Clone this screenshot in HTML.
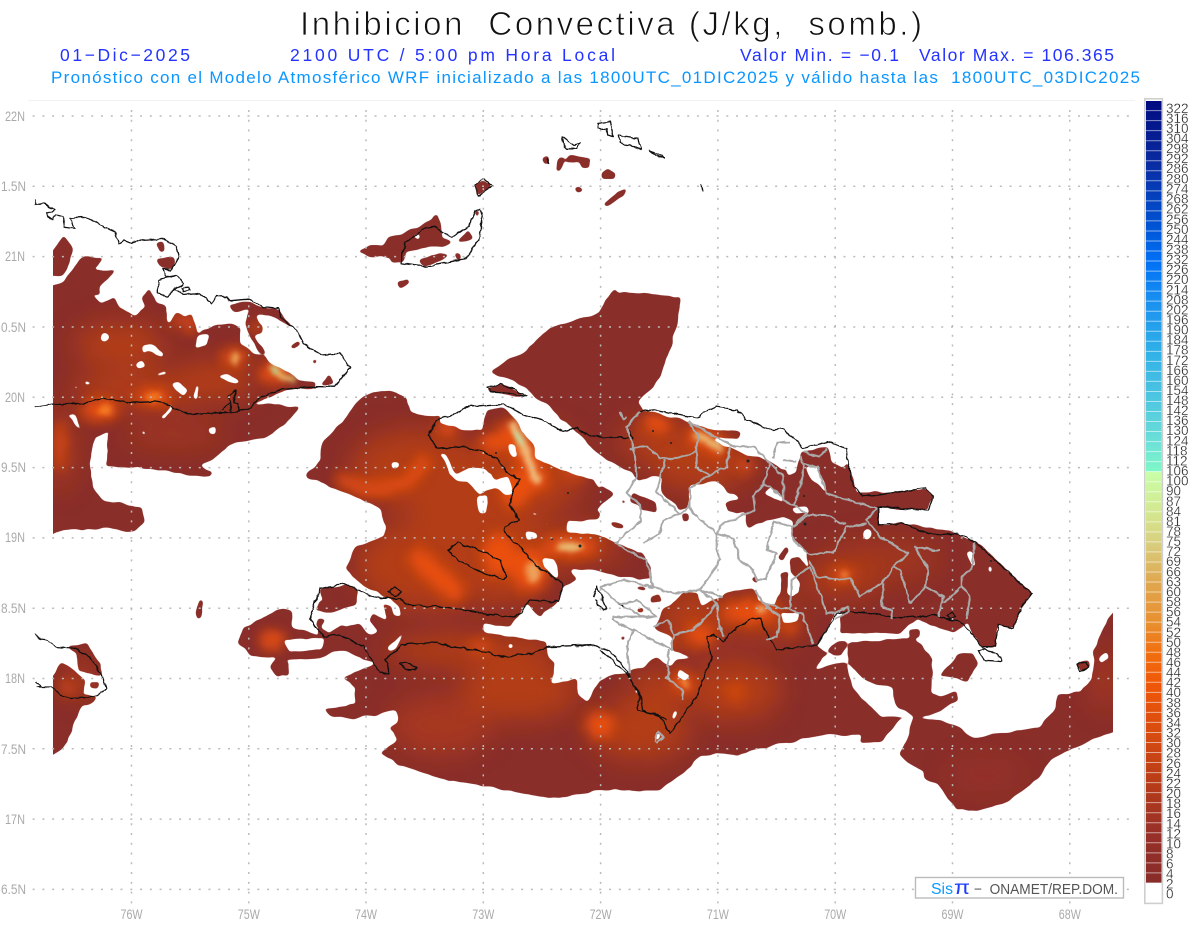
<!DOCTYPE html>
<html><head><meta charset="utf-8"><title>Inhibicion Convectiva</title>
<style>
html,body{margin:0;padding:0;background:#fff}
svg{display:block}
text{font-family:"Liberation Sans",sans-serif}
.c{fill:none;stroke:#111;stroke-width:1.3;stroke-linejoin:round;vector-effect:non-scaling-stroke}
.g{fill:none;stroke:#a9a9a9;stroke-width:2;stroke-linejoin:round;vector-effect:non-scaling-stroke}
.ax{font-size:14px;fill:#aaa}
.cb{font-size:13.5px;fill:#222;stroke:#fff;stroke-width:.25}
</style></head><body>
<svg xmlns="http://www.w3.org/2000/svg" width="1200" height="927" viewBox="0 0 1200 927">
<defs>
<filter id="b14" x="-50%" y="-50%" width="200%" height="200%"><feGaussianBlur stdDeviation="13"/></filter>
<filter id="b6" x="-50%" y="-50%" width="200%" height="200%"><feGaussianBlur stdDeviation="6"/></filter>
<filter id="b3" x="-50%" y="-50%" width="200%" height="200%"><feGaussianBlur stdDeviation="2.5"/></filter>
<filter id="smooth" filterUnits="userSpaceOnUse" x="0" y="90" width="1140" height="780" color-interpolation-filters="sRGB">
<feTurbulence type="fractalNoise" baseFrequency=".07" numOctaves="2" seed="4" result="n"/>
<feDisplacementMap in="SourceGraphic" in2="n" scale="5" xChannelSelector="R" yChannelSelector="G" result="d"/>
<feGaussianBlur in="d" stdDeviation="1.5"/>
<feComponentTransfer><feFuncA type="linear" slope="7" intercept="-3"/></feComponentTransfer>
</filter>
<filter id="wig" filterUnits="userSpaceOnUse" x="0" y="90" width="1140" height="800" color-interpolation-filters="sRGB">
<feTurbulence type="fractalNoise" baseFrequency=".13" numOctaves="2" seed="7" result="n"/>
<feDisplacementMap in="SourceGraphic" in2="n" scale="4" xChannelSelector="R" yChannelSelector="G"/>
</filter>
<clipPath id="dom"><rect x="53" y="90" width="1060" height="780"/></clipPath>
<linearGradient id="bar" x1="0" y1="0" x2="0" y2="1">
<stop offset="0" stop-color="#000a80"/><stop offset=".077" stop-color="#0a2aa0"/><stop offset=".154" stop-color="#0050d0"/><stop offset=".205" stop-color="#0070f5"/><stop offset=".256" stop-color="#1a90f0"/><stop offset=".32" stop-color="#30b0e8"/><stop offset=".385" stop-color="#50c8e0"/><stop offset=".436" stop-color="#6ce0d8"/><stop offset=".474" stop-color="#80f8c8"/><stop offset=".474" stop-color="#c8ffa8"/><stop offset=".526" stop-color="#d4e890"/><stop offset=".564" stop-color="#d8d080"/><stop offset=".615" stop-color="#e0a850"/><stop offset=".667" stop-color="#e89030"/><stop offset=".705" stop-color="#f07010"/><stop offset=".744" stop-color="#f05808"/><stop offset=".808" stop-color="#d84c10"/><stop offset=".872" stop-color="#b83c18"/><stop offset=".936" stop-color="#983028"/><stop offset="1" stop-color="#882c2a"/>
</linearGradient>
<mask id="land" maskUnits="userSpaceOnUse" x="0" y="0" width="1200" height="927">
<rect width="1200" height="927" fill="#000"/>
<g fill="#fff">
<polygon transform="translate(20 180) scale(.33333)" points="70,240 99,210 135,165 158,205 150,238 130,285 130,305 190,228 250,235 215,270 290,268 240,320 240,345 165,345 215,345 245,370 285,350 300,385 345,405 375,380 365,355 385,325 410,365 440,375 445,435 470,395 495,410 515,400 530,460 570,440 630,430 660,445 660,490 700,520 735,525 745,545 800,575 835,600 890,610 880,625 800,630 700,670 840,680 800,730 740,770 640,790 590,830 540,860 578,875 570,890 520,885 450,875 360,865 262,860 265,760 285,745 225,770 210,845 220,930 250,960 365,985 375,1025 345,1055 270,1045 130,1050 100,1065 70,1085"/>
<polygon transform="translate(20 180) scale(.33333)" points="625,375 670,365 770,388 830,455 790,430 745,405 705,405 725,440 725,460 700,465 740,520 715,515 690,475 680,425 690,385 660,395 640,395"/>
<polygon transform="translate(20 180) scale(.33333)" points="810,495 840,480 840,495 815,505"/>
<polygon transform="translate(20 180) scale(.33333)" points="875,545 895,535 890,555"/>
<polygon transform="translate(20 180) scale(.33333)" points="900,615 925,585 945,615"/>
<polygon transform="translate(20 180) scale(.33333)" points="960,545 972,545 970,555"/>
<polygon transform="translate(20 180) scale(.33333)" points="405,190 430,185 437,215 425,218"/>
<polygon transform="translate(20 180) scale(.33333)" points="410,235 460,230 465,250 455,270 420,255"/>
<polygon points="65,647 87,643 100,663 102,677 87,673 78,670 77,653"/>
<polygon points="62,663 72,668 85,680 83,695 98,695 95,702 83,705 75,720 68,742 53,755 45,762 45,686"/>
<polygon points="91,682 99,683 99,688 91,688"/>
<polygon points="238,643 243,628 257,620 283,608 292,610 293,628 325,637 342,627 358,623 372,640 363,650 333,652 320,658 283,660 290,662 287,675 277,677 270,668 277,658 260,657 250,655"/>
<polygon transform="translate(300 380) scale(.33333)" points="20,280 60,240 70,180 100,150 140,110 190,45 270,30 320,50 330,95 380,110 420,105 420,130 500,150 545,150 560,95 610,80 650,125 680,170 700,190 710,240 760,260 830,285 880,300 900,330 940,340 890,390 915,410 890,420 800,420 800,460 900,465 950,490 1000,510 1040,540 1060,590 1020,600 960,590 880,570 810,570 830,600 790,620 780,660 730,700 720,710 680,670 660,700 630,740 550,730 550,755 600,770 740,785 700,830 300,850 190,840 100,790 60,770 50,730 85,760 125,735 170,745 215,765 235,755 205,720 220,700 260,720 250,670 275,680 280,710 305,710 300,680 270,660 250,650 235,630 215,630 180,610 135,560 170,500 250,470 260,440 240,390 190,360 100,325 20,290"/>
<polygon transform="translate(300 380) scale(.33333)" points="925,420 970,430 975,445 935,445"/>
<polygon transform="translate(300 380) scale(.33333)" points="60,660 125,655 120,680 80,700 45,690"/>
<polygon transform="translate(300 380) scale(.33333)" points="50,715 80,720 60,740 45,735"/>
<polygon points="318,590 345,585 360,590 355,605 330,612"/>
<polygon points="195,612 200,599 203,601 202,617 197,619"/>
<polygon points="490,372 525,350 550,328 575,320 600,312 605,300 615,287 618,292 633,293 682,297 672,345 660,378 638,402 643,411 660,413 690,422 713,430 740,432 738,440 720,438 712,440 747,455 760,457 783,470 800,460 800,452 827,447 832,462 843,468 848,462 857,493 883,493 925,488 933,497 928,510 878,508 878,525 902,523 958,533 977,543 1007,570 1032,593 1022,607 1013,628 998,625 995,647 980,647 967,623 953,633 917,620 900,633 840,633 840,613 833,618 817,647 710,657 690,657 673,650 672,637 653,628 663,610 682,593 640,560 640,485 637,480 633,473 613,463 597,453 580,435 560,417 540,400 527,388 510,380"/>
<polygon points="487,388 500,384 517,390 527,397 507,394 490,392"/>
<polygon points="343,678 355,688 355,703 322,710 333,717 353,719 397,710 398,723 388,728 397,740 380,753 400,765 440,778 495,788 530,795 560,798 600,790 660,790 690,768 700,756 717,753 737,756 767,747 823,735 863,735 860,743 882,742 900,720 910,717 882,717 852,688 847,663 838,663 813,670 828,653 817,647 717,643 710,657 677,660 670,667 657,657 643,667 627,670 610,675 600,680 587,702 577,693 575,667 563,670 550,657 547,642 483,632 420,640"/>
<polygon points="848,643 913,637 933,660 930,692 940,696 958,692 958,700 937,713 917,718 897,708 892,687 867,682 848,663"/>
<polygon points="913,717 953,723 973,738 1040,727 1053,710 1058,695 1080,693 1093,677 1093,650 1113,612 1125,600 1125,728 1113,732 1073,748 1050,760 1040,777 1010,800 977,811 955,809 938,783 925,780 923,772 900,755 908,735"/>
<polygon points="827,650 837,640 847,642 842,655 833,655"/>
<polygon points="909,629 919,629 919,637 911,638"/>
<polygon points="938,677 957,655 973,653 978,663 967,683 957,677"/>
<polygon points="1076,664 1087,661 1089,668 1080,672"/>
<polygon points="358,252 370,246 382,246 390,237 418,227 438,213 440,222 442,237 452,242 443,247 430,247 407,252 403,263 390,262 390,257 373,258"/>
<polygon points="418,260 440,253 450,255 440,262 422,267"/>
<polygon points="454,254 461,254 459,262"/>
<polygon points="457,242 468,229 473,238 465,243"/>
<polygon points="473,211 479,211 477,219"/>
<polygon points="396,282 407,277 409,282 400,289"/>
<polygon points="475,185 482,180 493,186 478,195"/>
<polygon points="542,158 548,157 548,164 544,164"/>
<polygon points="556,160 560,156 565,157 561,172 556,171"/>
<polygon points="565,161 568,155 583,157 590,160 590,168 582,168 580,162"/>
<polygon points="601,172 608,169 616,173 616,179 601,179"/>
<polygon points="574,188 580,186 584,190 577,194"/>
<polygon points="603,203 617,192 627,188 625,197 607,206"/>
<polygon points="621,278 625,277 625,282"/>
</g>
<g fill="#000">
<polygon transform="translate(20 180) scale(.33333)" points="60,300 99,292 130,285 130,305 99,318 60,330"/>
<g transform="translate(20 180) scale(.33333)">
<ellipse cx="253" cy="473" rx="12" ry="14"/>
<polygon points="180,490 200,503 190,490"/><polygon points="225,525 270,538 240,538"/><polygon points="370,495 395,490 430,525 425,535 385,510 370,525"/><polygon points="345,555 365,540 375,560 355,568"/><polygon points="410,578 440,575 440,585 415,585"/><polygon points="190,605 235,615 195,615"/><polygon points="165,615 180,625 165,630"/><polygon points="452,610 475,605 505,630 490,648"/><polygon points="525,615 535,615 532,660 520,655"/><polygon points="590,590 625,580 660,605 640,610"/><polygon points="530,465 565,460 560,500 525,505"/><polygon points="135,705 165,703 185,745 225,770 210,770 170,740 150,715"/><polygon points="420,715 450,680 460,685 430,718"/><polygon points="450,660 462,685 448,675"/><polygon points="565,745 590,738 585,765 570,765"/><polygon points="365,750 385,760 370,765"/>
</g>
<g transform="translate(300 380) scale(.33333)">
<polygon points="272,248 298,248 298,262 275,265"/>
<polygon points="420,215 436,222 448,255 470,285 508,265 556,268 590,300 628,290 640,345 618,350 588,322 535,345 505,305 470,302 445,280"/>
<polygon points="530,350 560,348 565,365 558,400 538,400"/>
<polygon points="625,190 645,195 655,225 640,235 625,215"/>
<polygon points="400,150 412,150 410,165"/><polygon points="565,150 585,150 575,160"/>
<polygon points="695,392 725,410 700,405"/><polygon points="735,387 760,410 745,405"/><polygon points="735,428 760,433 735,437"/>
<polygon points="675,455 710,460 715,480 680,480"/><polygon points="695,503 707,503 700,517"/>
<polygon points="725,535 760,535 775,575 780,595 755,585 735,565"/><polygon points="575,275 580,295 570,295"/>
<polygon points="620,790 640,790 640,805 625,805"/><polygon points="260,800 315,755 290,800 265,815"/>
<polygon points="650,375 660,375 655,390"/>
</g>
<g transform="translate(600 380) scale(.33333)">
<polygon points="110,310 160,290 185,290 185,335 240,390 265,380 270,320 350,300 420,355 375,370 385,395 415,400 435,395 440,440 500,420 550,410 580,420 575,470 620,515 625,560 590,560 570,570 600,610 600,640 575,650 560,640 560,575 540,580 540,640 520,680 475,660 465,630 400,630 360,650 300,680 295,640 250,640 190,690 165,740 100,700 50,610 165,600 150,560 130,520 90,490 40,470 0,470 0,385 45,340 0,310 0,235"/>
<polygon points="610,260 650,255 670,300 680,335 740,365 690,345 640,305"/>
<polygon points="690,195 740,210 745,240 725,230"/>
<polygon points="490,340 510,320 545,345 550,370"/>
<polygon points="555,240 595,245 590,280 565,290 555,260"/>
<polygon points="575,380 620,380 625,400 590,400"/>
<ellipse cx="803" cy="463" rx="12" ry="18"/>
<polygon points="1095,515 1115,515 1135,560 1120,555"/><ellipse cx="1170" cy="565" rx="6" ry="10"/>
<polygon points="540,700 600,695 590,720 550,730"/><polygon points="700,700 745,690 720,710 700,715"/>
<polygon points="240,870 270,885 255,905 235,890"/><polygon points="100,930 115,920 110,945"/>
<polygon points="445,270 460,270 455,280"/><polygon points="165,1060 185,1060 170,1085"/>
<polygon points="225,985 232,1000 225,1020 218,1010"/>
<polygon points="-100,720 -40,730 0,690 55,750 90,880 0,890 -150,910"/>
</g>
<polygon points="1097,660 1106,651 1108,658 1100,664"/>
<polygon points="283,640 325,638 320,650 290,652"/>
<polygon points="215,380 240,375 235,395" transform="translate(340 110) scale(.33333)"/>
</g>
<g fill="#fff" transform="translate(600 380) scale(.33333)">
<polygon points="100,340 140,355 170,370 170,400 125,390 120,375 90,365"/><polygon points="62,358 78,362 68,375"/><polygon points="25,420 70,430 75,445 40,440"/>
<polygon points="0,315 45,340 0,380"/>
<polygon points="245,400 265,400 265,425 245,425"/><polygon points="385,365 420,360 420,400 390,395"/>
<polygon points="440,395 480,360 500,360 550,405 500,420 445,445"/><polygon points="360,305 420,320 435,350 385,340"/>
<polygon points="530,530 565,495 570,515 545,540"/><polygon points="570,540 600,530 625,570 590,570 575,580"/>
<polygon points="543,590 565,575 565,620 555,650 540,650"/><polygon points="453,598 472,588 472,612"/>
<polygon points="105,630 120,620 145,625 130,635"/><polygon points="150,650 175,640 190,665 150,670"/><polygon points="60,773 77,768 72,787"/>
<polygon points="670,275 690,280 715,320 700,335 680,330"/><polygon points="108,685 130,678 132,697 112,696"/>
</g>
</mask>
</defs>
<rect width="1200" height="927" fill="#fff"/>

<!-- titles -->
<text x="300" y="35" font-size="33" fill="#111" stroke="#fff" stroke-width=".8" textLength="622" lengthAdjust="spacing">Inhibicion&#160;&#160;Convectiva (J/kg,&#160;&#160;somb.)</text>
<g font-size="17.5" fill="#2433ff">
<text x="60" y="61" textLength="130" lengthAdjust="spacing">01−Dic−2025</text>
<text x="290" y="61" textLength="325" lengthAdjust="spacing">2100 UTC / 5:00 pm Hora Local</text>
<text x="740" y="61" textLength="159" lengthAdjust="spacing">Valor Min. = −0.1</text>
<text x="919" y="61" textLength="195" lengthAdjust="spacing">Valor Max. = 106.365</text>
</g>
<text x="51" y="83" font-size="17" fill="#0a96ff" textLength="1089" lengthAdjust="spacing">Pronóstico con el Modelo Atmosférico WRF inicializado a las 1800UTC_01DIC2025 y válido hasta las&#160;&#160;1800UTC_03DIC2025</text>

<path d="M28 100.5H1135" stroke="#f2f2f2" fill="none"/>

<!-- data field -->
<g clip-path="url(#dom)">
<g filter="url(#smooth)">
<g mask="url(#land)">
<rect x="0" y="90" width="1140" height="760" fill="#8a2e2a"/>
<g filter="url(#b14)" fill="#b23d18">
<ellipse cx="120" cy="345" rx="45" ry="22"/><ellipse cx="140" cy="390" rx="70" ry="18"/><ellipse cx="215" cy="380" rx="40" ry="20"/>
<ellipse cx="60" cy="450" rx="10" ry="40"/><ellipse cx="175" cy="435" rx="50" ry="12" opacity=".6"/>
<ellipse cx="420" cy="470" rx="70" ry="40"/><ellipse cx="430" cy="565" rx="75" ry="45"/><ellipse cx="505" cy="555" rx="45" ry="50"/><ellipse cx="460" cy="520" rx="50" ry="30"/>
<ellipse cx="470" cy="650" rx="85" ry="16"/><ellipse cx="520" cy="690" rx="60" ry="30"/><ellipse cx="640" cy="730" rx="50" ry="30"/>
<ellipse cx="735" cy="690" rx="45" ry="30"/><ellipse cx="440" cy="725" rx="50" ry="30" opacity=".7"/>
<ellipse cx="530" cy="470" rx="55" ry="45"/><ellipse cx="570" cy="545" rx="50" ry="20"/><ellipse cx="660" cy="440" rx="40" ry="20"/>
<ellipse cx="700" cy="465" rx="50" ry="25"/><ellipse cx="880" cy="560" rx="60" ry="20" opacity=".6"/><ellipse cx="840" cy="580" rx="40" ry="15"/>
<ellipse cx="690" cy="620" rx="30" ry="30"/><ellipse cx="750" cy="615" rx="45" ry="20"/><ellipse cx="660" cy="690" rx="30" ry="20"/>
<ellipse cx="1105" cy="680" rx="12" ry="30" opacity=".7"/><ellipse cx="985" cy="775" rx="40" ry="18" opacity=".25"/><ellipse cx="80" cy="680" rx="15" ry="15"/>
<ellipse cx="780" cy="625" rx="20" ry="15"/>
</g>
<g filter="url(#b6)" fill="#ea4f0c">
<ellipse cx="100" cy="410" rx="18" ry="11"/><ellipse cx="153" cy="397" rx="18" ry="8"/><ellipse cx="235" cy="357" rx="12" ry="9"/><ellipse cx="190" cy="323" rx="5" ry="11"/><ellipse cx="177" cy="320" rx="4" ry="8"/><ellipse cx="257" cy="327" rx="5" ry="6"/><ellipse cx="275" cy="372" rx="15" ry="12"/>
<path d="M337 477Q375 500 412 478L427 458" fill="none" stroke="#ea4f0c" stroke-width="11"/>
<path d="M413 553L460 597" fill="none" stroke="#ea4f0c" stroke-width="20"/>
<path d="M507 423L530 463L540 490" fill="none" stroke="#ea4f0c" stroke-width="22"/>
<ellipse cx="493" cy="443" rx="13" ry="10"/><ellipse cx="447" cy="428" rx="11" ry="7"/><ellipse cx="570" cy="547" rx="28" ry="10"/><ellipse cx="530" cy="570" rx="18" ry="22"/><ellipse cx="500" cy="555" rx="18" ry="22"/><ellipse cx="515" cy="490" rx="14" ry="18"/>
<ellipse cx="575" cy="470" rx="12" ry="10" opacity=".6"/>
<ellipse cx="657" cy="424" rx="14" ry="9"/><path d="M690 432L725 450" fill="none" stroke="#ea4f0c" stroke-width="20"/><ellipse cx="745" cy="465" rx="10" ry="7" opacity=".7"/>
<ellipse cx="843" cy="575" rx="11" ry="6"/><ellipse cx="750" cy="612" rx="28" ry="11"/><ellipse cx="790" cy="627" rx="9" ry="5"/><ellipse cx="683" cy="683" rx="11" ry="10"/><ellipse cx="700" cy="635" rx="15" ry="10"/><ellipse cx="665" cy="645" rx="9" ry="8" opacity=".7"/>
<ellipse cx="272" cy="640" rx="12" ry="9"/><ellipse cx="67" cy="688" rx="7" ry="6" opacity=".8"/><ellipse cx="60" cy="445" rx="5" ry="25" opacity=".8"/>
<ellipse cx="600" cy="725" rx="14" ry="13"/><ellipse cx="735" cy="692" rx="9" ry="12" opacity=".5"/><ellipse cx="480" cy="646" rx="12" ry="6" opacity=".8"/><ellipse cx="640" cy="608" rx="5" ry="3"/>
</g>
<g filter="url(#b3)">
<path d="M510 423L520 437L530 463L538 483" fill="none" stroke="#f0c080" stroke-width="8"/>
<path d="M270 365L285 378L295 381" fill="none" stroke="#eccd78" stroke-width="5"/>
<ellipse cx="235" cy="358" rx="4" ry="7" fill="#e8a858"/>
<ellipse cx="570" cy="547" rx="14" ry="4.5" fill="#e8c078"/><ellipse cx="533" cy="572" rx="7" ry="11" fill="#eda05a"/>
<path d="M695 434L722 449" fill="none" stroke="#e8c078" stroke-width="7"/>
<ellipse cx="762" cy="610" rx="5" ry="3" fill="#eec080"/><ellipse cx="685" cy="683" rx="3" ry="4" fill="#f5a050"/><ellipse cx="105" cy="410" rx="8" ry="5" fill="#f47a24"/><ellipse cx="153" cy="397" rx="7" ry="4" fill="#f47a24"/>
<ellipse cx="844" cy="575" rx="3" ry="4" fill="#f58a3a"/>
</g>
<g filter="url(#b3)" opacity=".95"><path d="M516 432L522 443" stroke="#a8f0b8" stroke-width="4" fill="none"/><ellipse cx="275" cy="371" rx="1.8" ry="4" fill="#80f0c8"/></g>
</g>
</g>
</g>

<!-- coastlines -->
<g filter="url(#wig)">
<polyline class="c" transform="translate(20 180) scale(.33333)" points="45,60 48,75 70,70 105,90 80,100 100,122 105,105 130,110 135,140 165,145 150,115 200,112 240,135 285,155 295,190 310,180 335,190 360,182 385,180 425,175 470,200 478,230 455,270 430,265 440,290 470,285 490,310 465,325 440,350 415,340 415,300 430,295 470,285"/>
<polyline class="c" transform="translate(20 180) scale(.33333)" points="465,325 490,345 540,340 575,370 590,348 620,350 630,362 680,358 730,380 775,385 780,410 830,450 850,490 905,525 960,520 990,565 945,620 890,620 790,628 720,650 690,685 640,697 550,700 500,703 440,672 400,665 330,668 250,655 190,670 100,672 45,680"/>
<polyline class="c" transform="translate(20 180) scale(.33333)" points="610,690 630,665 635,698 655,695 655,670 640,665 650,630 625,650 630,665"/>
<polygon class="c" transform="translate(20 180) scale(.33333)" points="483,322 505,320 510,330 490,335"/>
<polyline class="c" points="35,633 40,640 48,641 57,647 75,649 90,657 102,675 107,689 97,695 87,697 70,698 60,695 52,687 37,687 41,686 36,682"/>
<polygon class="c" transform="translate(340 110) scale(.33333)" points="405,225 430,205 458,228 415,257"/>
<polygon class="c" transform="translate(340 110) scale(.33333)" points="185,430 185,460 260,470 380,445 418,385 428,320 420,298 405,305 385,350 335,380 310,370 285,350 245,358 215,385 195,395 195,410"/>
<polygon class="c" transform="translate(340 110) scale(.33333)" points="775,40 810,35 815,60 820,80 803,75 800,55 775,55"/>
<polygon class="c" transform="translate(340 110) scale(.33333)" points="835,75 895,85 905,120 870,105 838,100"/>
<polygon class="c" transform="translate(340 110) scale(.33333)" points="928,122 960,135 970,147 945,135"/>
<polygon class="c" transform="translate(340 110) scale(.33333)" points="665,78 670,105 680,115 710,115 720,100 700,105"/>
<polyline class="c" transform="translate(340 110) scale(.33333)" points="620,145 625,165"/><polyline class="c" transform="translate(340 110) scale(.33333)" points="1083,222 1087,245"/>
<polygon class="c" transform="translate(300 380) scale(.33333)" points="560,25 600,12 650,30 680,50 620,40 570,35"/>
<polyline class="c" transform="translate(300 380) scale(.33333)" points="1000,175 880,170 830,145 790,155 740,125 670,105 610,72 500,80 470,100 410,120 385,165 410,205 480,200 540,210 590,235 630,285 660,295 640,330 630,370 655,420 615,440 615,460 660,500 710,560 790,610 775,665 690,660 660,700 640,712 540,700 420,680 320,675 300,655 250,655 220,650 130,610 60,625 45,665 30,720 70,770 120,765 190,800 240,880 270,880 255,840 305,795 410,785 450,800 530,810 610,830 700,820 740,800 880,795 930,815 980,870 1020,950 1010,990 1065,1000 1100,1020"/>
<polygon class="c" transform="translate(300 380) scale(.33333)" points="445,510 470,488 540,510 600,540 620,590 610,600 530,570 470,540"/>
<polygon class="c" transform="translate(300 380) scale(.33333)" points="265,635 285,622 305,635 285,648"/>
<polygon class="c" transform="translate(300 380) scale(.33333)" points="300,850 320,850 348,860 345,870 315,868"/>
<polyline class="c" transform="translate(300 380) scale(.33333)" points="880,650 890,620 920,685 910,690 885,660"/>
<polyline class="c" transform="translate(600 380) scale(.33333)" points="100,175 80,140 120,95 170,90 290,115 310,100 350,80 410,90 440,120 520,150 550,145 610,205 680,185 740,205 745,250 760,320 790,350 975,325 1000,350 985,390 835,380 835,435 905,430 1000,465 1075,460 1130,490 1295,640 1265,680 1240,745 1195,735 1185,800 1145,800 1090,730 1000,705 940,710 880,715 840,705 820,700 740,695 710,700 700,720 650,795 530,810 510,780 480,715 460,715 400,750 370,785 340,765 320,770 335,830 290,950 210,1060 180,1010 130,990 120,940 80,880 0,810"/>
<polygon class="c" transform="translate(600 380) scale(.33333)" points="1135,810 1150,805 1205,830 1205,845 1150,840"/>
<polygon class="c" transform="translate(600 380) scale(.33333)" points="1040,705 1055,695 1068,710 1050,718"/>
<polygon class="c" transform="translate(600 380) scale(.33333)" points="60,675 110,660 170,710 140,715"/>
<polygon class="c" points="1077,664 1087,662 1088,668 1080,671"/>
</g>
<g fill="#222"><circle cx="653" cy="431" r="1"/><circle cx="671" cy="443" r="1"/><circle cx="496" cy="453" r="1"/><circle cx="568" cy="493" r="1"/><circle cx="552" cy="539" r="1"/><circle cx="580" cy="546" r="1.5"/><circle cx="748" cy="461" r="1.5"/><circle cx="804" cy="496" r="1"/><circle cx="805" cy="524" r="1.5"/><circle cx="991" cy="561" r="1"/><circle cx="1026" cy="600" r="1"/></g>

<!-- province borders -->
<g filter="url(#wig)">
<g transform="translate(600 380) scale(.33333)">
<polyline class="g" points="120,95 80,140 100,200 110,290 80,340 120,375 125,420 45,490 100,520 140,540 160,620 70,600 0,620"/>
<polyline class="g" points="145,620 220,640 300,630"/>
<polyline class="g" points="90,205 140,200 180,235 240,235 290,215 290,265 330,285 270,325 270,380 240,400 170,335 180,290 195,240"/>
<polyline class="g" points="265,125 295,165 290,215"/><polyline class="g" points="330,285 380,260 390,200"/>
<polyline class="g" points="265,125 400,200 460,200 510,250 490,310 460,350 465,390 370,430 350,460 280,400 270,380"/>
<polyline class="g" points="510,250 550,290 550,360 580,375 610,290 610,255 650,260 680,340 790,375 830,385 800,420 840,470 925,520"/>
<polyline class="g" points="600,230 610,255"/><polyline class="g" points="520,235 530,190 570,185"/><polyline class="g" points="550,240 590,245"/><polyline class="g" points="610,215 660,230 680,205"/>
<polyline class="g" points="490,310 550,350"/><polyline class="g" points="580,375 620,400 575,440 580,480 630,525 700,515 740,440 800,430"/>
<polyline class="g" points="580,440 625,405 680,405 720,430 740,430"/>
<polyline class="g" points="350,460 400,475 420,540 460,570 470,600 495,600 530,520 500,510 520,425 575,440"/>
<polyline class="g" points="350,460 350,510 360,540 330,590 300,630 370,650"/>
<polyline class="g" points="130,490 180,460 190,420 240,400"/>
<polyline class="g" points="300,630 350,670 320,710 280,750 220,765 205,720 160,740"/>
<polyline class="g" points="350,670 355,720 370,770"/>
<polyline class="g" points="465,630 490,670 540,710 530,770 500,780"/>
<polyline class="g" points="490,670 570,690 605,700 640,790"/>
<polyline class="g" points="570,690 575,600 630,560 660,640 680,700 700,700"/>
<polyline class="g" points="630,540 650,590 720,600 750,595 780,650 845,610 880,560 925,520"/>
<polyline class="g" points="880,560 900,570 930,670 975,620 985,570 945,500 1000,510 1020,510"/>
<polyline class="g" points="850,610 845,680 875,690 875,720"/>
<polyline class="g" points="975,620 1030,650 1020,690 1015,710"/>
<polyline class="g" points="1030,670 1085,620 1110,650 1100,720"/>
<polyline class="g" points="1085,620 1085,590 1115,570 1125,490"/>
<polyline class="g" points="220,765 215,810 100,750 80,800 90,880"/>
<polyline class="g" points="205,810 205,890 200,890 250,935 245,960"/>
<polyline class="g" points="0,620 60,675"/>
<polyline class="g" points="60,675 110,660 170,710 140,715 70,680"/>
<polyline class="g" points="170,710 40,710 40,720 105,755"/>
<polyline class="g" points="165,1085 175,1055 190,1070 170,1090"/>
<polyline class="g" points="700,700 745,680 745,695 710,715"/>
<polyline class="g" points="60,95 70,115 80,110"/>
</g>
</g>

<!-- grid -->
<g stroke="#bbb" stroke-width="1.5" fill="none" stroke-dasharray="2 7.77">
<path d="M32.6 116H1136M32.6 186.3H1136M32.6 256.6H1136M32.6 327H1136M32.6 397.3H1136M32.6 467.6H1136M32.6 537.9H1136M32.6 608.2H1136M32.6 678.5H1136M32.6 748.8H1136M32.6 819.1H1136M32.6 889.4H1136"/>
<path d="M131.5 110V904M248.8 110V904M366 110V904M483.3 110V904M600.6 110V904M717.9 110V904M835.2 110V904M952.5 110V904M1069.8 110V904"/>
</g>

<!-- axis labels -->
<g class="ax">
<text x="5" y="121" textLength="20" lengthAdjust="spacingAndGlyphs">22N</text><text x="1" y="191" textLength="25" lengthAdjust="spacingAndGlyphs">1.5N</text><text x="5" y="261" textLength="20" lengthAdjust="spacingAndGlyphs">21N</text><text x="1" y="332" textLength="25" lengthAdjust="spacingAndGlyphs">0.5N</text><text x="5" y="402" textLength="20" lengthAdjust="spacingAndGlyphs">20N</text><text x="1" y="472" textLength="25" lengthAdjust="spacingAndGlyphs">9.5N</text><text x="5" y="542" textLength="20" lengthAdjust="spacingAndGlyphs">19N</text><text x="1" y="613" textLength="25" lengthAdjust="spacingAndGlyphs">8.5N</text><text x="5" y="683" textLength="20" lengthAdjust="spacingAndGlyphs">18N</text><text x="1" y="754" textLength="25" lengthAdjust="spacingAndGlyphs">7.5N</text><text x="5" y="824" textLength="20" lengthAdjust="spacingAndGlyphs">17N</text><text x="1" y="894" textLength="25" lengthAdjust="spacingAndGlyphs">6.5N</text>
<text x="120.5" y="919" textLength="22" lengthAdjust="spacingAndGlyphs">76W</text><text x="237.8" y="919" textLength="22" lengthAdjust="spacingAndGlyphs">75W</text><text x="355" y="919" textLength="22" lengthAdjust="spacingAndGlyphs">74W</text><text x="472.3" y="919" textLength="22" lengthAdjust="spacingAndGlyphs">73W</text><text x="589.6" y="919" textLength="22" lengthAdjust="spacingAndGlyphs">72W</text><text x="706.9" y="919" textLength="22" lengthAdjust="spacingAndGlyphs">71W</text><text x="824.2" y="919" textLength="22" lengthAdjust="spacingAndGlyphs">70W</text><text x="941.5" y="919" textLength="22" lengthAdjust="spacingAndGlyphs">69W</text><text x="1058.8" y="919" textLength="22" lengthAdjust="spacingAndGlyphs">68W</text>
</g>

<!-- watermark -->
<rect x="915.5" y="877.5" width="208" height="20.5" fill="#fff" stroke="#bbb" stroke-width="1.4"/>
<text x="931" y="894" font-size="15.5" fill="#0a9bff" textLength="22" lengthAdjust="spacingAndGlyphs">Sis</text>
<text x="954" y="894" font-size="19" fill="#1d3cff" textLength="16" lengthAdjust="spacingAndGlyphs">π</text>
<text x="974" y="894" font-size="14.5" fill="#555" textLength="144" lengthAdjust="spacingAndGlyphs">−&#160;&#160;ONAMET/REP.DOM.</text>

<!-- colour bar -->
<rect x="1144.8" y="98.8" width="17.6" height="804.6" fill="#fff" stroke="#cfcfcf" stroke-width="1.6"/>
<rect x="1146" y="101" width="15.5" height="782" fill="url(#bar)"/>
<path d="M1153.8 110.1V883" stroke="#fff" stroke-opacity=".55" stroke-width="15.5" stroke-dasharray="1 9.03" fill="none"/>
<g class="cb">
<text x="1166" y="113">322</text><text x="1166" y="123">316</text><text x="1166" y="133">310</text><text x="1166" y="143">304</text><text x="1166" y="153">298</text><text x="1166" y="163">292</text><text x="1166" y="173">286</text><text x="1166" y="183.5">280</text><text x="1166" y="193.5">274</text><text x="1166" y="203.5">268</text><text x="1166" y="213.7">262</text><text x="1166" y="223.8">256</text><text x="1166" y="233.8">250</text><text x="1166" y="244">244</text><text x="1166" y="254">238</text><text x="1166" y="264">232</text><text x="1166" y="274">226</text><text x="1166" y="284">220</text><text x="1166" y="294.3">214</text><text x="1166" y="304.4">208</text><text x="1166" y="314.4">202</text><text x="1166" y="324.5">196</text><text x="1166" y="334.5">190</text><text x="1166" y="344.6">184</text><text x="1166" y="354.7">178</text><text x="1166" y="364.8">172</text><text x="1166" y="374.8">166</text><text x="1166" y="385">160</text><text x="1166" y="395">154</text><text x="1166" y="405">148</text><text x="1166" y="415">142</text><text x="1166" y="425">136</text><text x="1166" y="435">130</text><text x="1166" y="445.3">124</text><text x="1166" y="455.4">118</text><text x="1166" y="465.5">112</text><text x="1166" y="475.5">106</text><text x="1166" y="485.6">100</text>
<text x="1166" y="495.7">90</text><text x="1166" y="505.8">87</text><text x="1166" y="515.8">84</text><text x="1166" y="526">81</text><text x="1166" y="536">78</text><text x="1166" y="546">75</text><text x="1166" y="556">72</text><text x="1166" y="566">69</text><text x="1166" y="576.3">66</text><text x="1166" y="586.4">63</text><text x="1166" y="596.4">60</text><text x="1166" y="606.5">58</text><text x="1166" y="616.6">56</text><text x="1166" y="626.7">54</text><text x="1166" y="636.8">52</text><text x="1166" y="646.8">50</text><text x="1166" y="656.9">48</text><text x="1166" y="667">46</text><text x="1166" y="677">44</text><text x="1166" y="687">42</text><text x="1166" y="697.2">40</text><text x="1166" y="707.3">38</text><text x="1166" y="717.4">36</text><text x="1166" y="727.5">34</text><text x="1166" y="737.5">32</text><text x="1166" y="747.6">30</text><text x="1166" y="757.7">28</text><text x="1166" y="767.8">26</text><text x="1166" y="777.8">24</text><text x="1166" y="788">22</text><text x="1166" y="798">20</text><text x="1166" y="808">18</text><text x="1166" y="818">16</text><text x="1166" y="828.3">14</text><text x="1166" y="838.4">12</text><text x="1166" y="848.4">10</text><text x="1166" y="858.5">8</text><text x="1166" y="868.6">6</text><text x="1166" y="878.6">4</text><text x="1166" y="888.7">2</text><text x="1166" y="898.5">0</text>
</g>
</svg>
</body></html>
